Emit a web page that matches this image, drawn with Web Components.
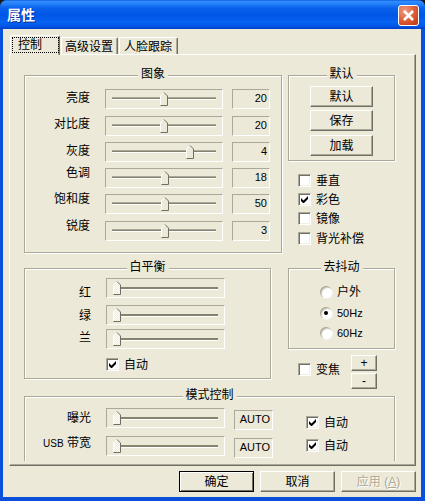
<!DOCTYPE html>
<html lang="zh">
<head>
<meta charset="utf-8">
<title>属性</title>
<style>
html, body { margin: 0; background: #1a1a1a; }
body { font: 12px/14px "Liberation Sans", "Noto Sans CJK SC", sans-serif; color: #000; }
.row { display: flex; align-items: flex-start; }
.col { display: flex; flex-direction: column; }
</style>
</head>
<body>
<xp-window heading="属性">
  <xp-tabs items="控制,高级设置,人脸跟踪">
    <div class="row">
      <xp-group heading="图象" style="width:258px;height:178px;--pad:13px 0 0 0">
        <xp-slider-row label="亮度" ltop="2" pos="55" value="20"></xp-slider-row>
        <xp-slider-row label="对比度" ltop="1" pos="55" value="20" style="margin-top:7px"></xp-slider-row>
        <xp-slider-row label="灰度" ltop="2" pos="81" value="4" style="margin-top:6px"></xp-slider-row>
        <xp-slider-row label="色调" ltop="-2" pos="56" value="18" style="margin-top:6px"></xp-slider-row>
        <xp-slider-row label="饱和度" ltop="-2" pos="56" value="50" style="margin-top:6px"></xp-slider-row>
        <xp-slider-row label="锐度" ltop="-2" pos="56" value="3" style="margin-top:7px"></xp-slider-row>
      </xp-group>
      <div class="col" style="margin-left:6px;width:107px">
        <xp-group heading="默认" style="width:107px;height:86px;--pad:10px 0 0 21px">
          <xp-button style="width:63px;height:21px">默认</xp-button>
          <xp-button style="width:63px;height:21px;margin-top:3px">保存</xp-button>
          <xp-button style="width:63px;height:21px;margin-top:4px">加载</xp-button>
        </xp-group>
        <xp-check style="margin:13px 0 0 10px">垂直</xp-check>
        <xp-check checked style="margin:6px 0 0 10px">彩色</xp-check>
        <xp-check style="margin:6px 0 0 10px">镜像</xp-check>
        <xp-check style="margin:7px 0 0 10px">背光补偿</xp-check>
      </div>
    </div>
    <div class="row" style="margin-top:15px">
      <xp-group heading="白平衡" style="width:247px;height:111px;--pad:9px 0 0 0">
        <xp-slider-row label="红" ltop="8" pos="7" low style="--lw:66px;--fw:119px"></xp-slider-row>
        <xp-slider-row label="绿" ltop="4" pos="7" low style="--lw:66px;--fw:119px;margin-top:5px"></xp-slider-row>
        <xp-slider-row label="兰" ltop="2" pos="7" low style="--lw:66px;--fw:119px;margin-top:4px"></xp-slider-row>
        <xp-check checked style="margin:9px 0 0 81px">自动</xp-check>
      </xp-group>
      <div class="col" style="margin-left:17px;width:107px">
        <xp-group heading="去抖动" style="width:107px;height:81px;--pad:16px 0 0 31px">
          <xp-radio>户外</xp-radio>
          <xp-radio checked style="margin-top:8px;font-size:11px">50Hz</xp-radio>
          <xp-radio style="margin-top:7px;font-size:11px">60Hz</xp-radio>
        </xp-group>
        <div class="row" style="margin:6px 0 0 10px">
          <xp-check style="margin-top:8px">变焦</xp-check>
          <div class="col" style="margin-left:11px">
            <xp-button style="width:26px;height:16px">+</xp-button>
            <xp-button style="width:26px;height:16px;margin-top:2px">-</xp-button>
          </div>
        </div>
      </div>
    </div>
    <xp-group heading="模式控制" open-bottom style="width:371px;height:65px;margin-top:7px;--pad:11px 0 0 0">
      <xp-slider-row label="曝光" ltop="3" pos="7" low value="AUTO" vtop="2" style="--lw:66px;--fw:119px">
        <xp-check checked style="margin:8px 0 0 33px">自动</xp-check>
      </xp-slider-row>
      <xp-slider-row label="USB 带宽" ltop="0" pos="7" low value="AUTO" vtop="2" style="--lw:66px;--fw:119px;margin-top:6px">
        <xp-check checked style="margin:3px 0 0 33px">自动</xp-check>
      </xp-slider-row>
    </xp-group>
  </xp-tabs>
  <div slot="actions" class="row" style="justify-content:flex-end;gap:6px;margin-top:5px">
    <xp-button default style="width:75px;height:21px">确定</xp-button>
    <xp-button style="width:75px;height:21px">取消</xp-button>
    <xp-button disabled style="width:75px;height:21px">应用 (<u>A</u>)</xp-button>
  </div>
</xp-window>

<script>
const windowTemplate = document.createElement("template");
windowTemplate.innerHTML = `
<style>
:host {
    display: flex;
    flex-direction: column;
    box-sizing: border-box;
    width: 425px;
    height: 501px;
    border-radius: 7px 7px 0 0;
    overflow: hidden;
    background: #0a4fdc;
}
#bar {
    flex: none;
    height: 29px;
    display: flex;
    align-items: center;
    justify-content: space-between;
    padding: 0 6px 0 7px;
    box-sizing: border-box;
    background: linear-gradient(#0a4fd0 0, #2f8cff 1px, #2a86fb 3px, #0a62ec 8px, #0056e6 15px, #0663f0 22px, #0058e8 26px, #003fc4 29px);
}
#heading {
    color: #fff;
    font: bold 14px/16px "Noto Sans CJK SC", sans-serif;
    text-shadow: 1px 1px 0 #0a2f9a;
    margin-bottom: 2px;
}
#close {
    width: 21px;
    height: 21px;
    box-sizing: border-box;
    border: 1px solid #fff;
    border-radius: 3px;
    background: radial-gradient(circle at 30% 25%, #ee9a7e, #dc5a34 55%, #b93710);
    display: flex;
    align-items: center;
    justify-content: center;
    margin-top: 2px;
}
#client {
    flex: none;
    width: 418px;
    height: 468px;
    margin-left: 3px;
    box-sizing: border-box;
    padding: 6px 5px 0 6px;
    background: #ece9d8;
}
</style>
<div id="bar">
  <span id="heading"></span>
  <span id="close">
    <svg width="13" height="13" viewBox="0 0 13 13"><path d="M2 2 L11 11 M11 2 L2 11" stroke="#fff" stroke-width="2.6" fill="none"/></svg>
  </span>
</div>
<div id="client">
  <slot></slot>
  <slot name="actions"></slot>
</div>
`;

class XpWindow extends HTMLElement {
    constructor() {
        super();
        this.attachShadow({ mode: "open" });
        this.shadowRoot.appendChild(windowTemplate.content.cloneNode(true));
    }

    connectedCallback() {
        this.shadowRoot.querySelector("#heading").textContent = this.getAttribute("heading");
    }
}

const tabsTemplate = document.createElement("template");
tabsTemplate.innerHTML = `
<style>
:host { display: block; }
#strip {
    display: flex;
    align-items: flex-end;
    height: 19px;
    padding-left: 1px;
    position: relative;
    z-index: 1;
}
.tab {
    box-sizing: border-box;
    height: 17px;
    margin-left: 1px;
    padding: 2px 4px 0 3px;
    background: #ece9d8;
    border-top: 1px solid #fff;
    border-left: 1px solid #fff;
    border-right: 1px solid #716f64;
    box-shadow: inset -1px 0 0 #aca899;
    border-radius: 2px 2px 0 0;
    white-space: nowrap;
}
.tab:nth-child(3) {
    padding: 2px 5px 0 4px;
}
.tab:first-child {
    height: 20px;
    width: 50px;
    margin: 0 0 -1px 0;
    padding: 1px 0 0 1px;
}
.tab:first-child span {
    display: block;
    box-sizing: border-box;
    width: 47px;
    height: 16px;
    padding: 0 0 0 5px;
    line-height: 14px;
    border: 1px dotted #000;
}
#page {
    box-sizing: border-box;
    height: 412px;
    padding: 20px 0 0 14px;
    background: #ece9d8;
    border-top: 1px solid #fff;
    border-left: 1px solid #fff;
    border-right: 1px solid #716f64;
    border-bottom: 1px solid #716f64;
    box-shadow: inset -1px -1px 0 #aca899;
}
</style>
<div id="strip"></div>
<div id="page"><slot></slot></div>
`;

class XpTabs extends HTMLElement {
    constructor() {
        super();
        this.attachShadow({ mode: "open" });
        this.shadowRoot.appendChild(tabsTemplate.content.cloneNode(true));
    }

    connectedCallback() {
        const strip = this.shadowRoot.querySelector("#strip");
        for (const name of this.getAttribute("items").split(",")) {
            const tab = document.createElement("div");
            tab.className = "tab";
            tab.innerHTML = `<span>${name}</span>`;
            strip.appendChild(tab);
        }
    }
}

const groupTemplate = document.createElement("template");
groupTemplate.innerHTML = `
<style>
:host {
    display: block;
    position: relative;
    box-sizing: border-box;
    flex: none;
    border: 1px solid #aca899;
    box-shadow: inset 1px 1px 0 #fff, 1px 1px 0 #fff;
    padding: var(--pad, 0);
}
:host([open-bottom]) {
    border-bottom: 0;
    box-shadow: inset 1px 1px 0 #fff, 1px 0 0 #fff;
}
#legend {
    position: absolute;
    top: -9px;
    left: 50%;
    transform: translateX(-50%);
    padding: 0 3px;
    background: #ece9d8;
    white-space: nowrap;
}
</style>
<span id="legend"></span>
<slot></slot>
`;

class XpGroup extends HTMLElement {
    constructor() {
        super();
        this.attachShadow({ mode: "open" });
        this.shadowRoot.appendChild(groupTemplate.content.cloneNode(true));
    }

    connectedCallback() {
        this.shadowRoot.querySelector("#legend").textContent = this.getAttribute("heading");
    }
}

const sliderRowTemplate = document.createElement("template");
sliderRowTemplate.innerHTML = `
<style>
:host {
    display: flex;
    align-items: flex-start;
}
#label {
    flex: none;
    width: var(--lw, 65px);
    text-align: right;
    white-space: nowrap;
}
#label small { font-size: 10px; }
#frame {
    flex: none;
    position: relative;
    box-sizing: border-box;
    width: var(--fw, 118px);
    height: 20px;
    margin-left: 15px;
    padding: 7px 6px 0;
    border-top: 1px solid #aca899;
    border-left: 1px solid #aca899;
    border-right: 1px solid #fff;
    border-bottom: 1px solid #fff;
}
#track {
    height: 3px;
    background: linear-gradient(#aca899 0 1px, #85836f 1px 2px, #fff 2px 3px);
}
:host([low]) #track {
    background: linear-gradient(#85836f 0 2px, #fff 2px 3px);
    margin-top: 1px;
}
#thumb {
    position: absolute;
    top: 2px;
    display: block;
}
#value {
    flex: none;
    box-sizing: border-box;
    width: 38px;
    height: 20px;
    margin-left: 9px;
    padding: 1px 2px 0 0;
    text-align: right;
    font-size: 11px;
    border-top: 1px solid #aca899;
    border-left: 1px solid #aca899;
    border-right: 1px solid #fff;
    border-bottom: 1px solid #fff;
}
:host([low]) #value { width: 39px; }
</style>
<span id="label"></span>
<div id="frame">
  <div id="track"></div>
  <svg id="thumb" width="8" height="14" viewBox="0 0 8 14">
    <defs>
      <pattern id="dots" width="2" height="2" patternUnits="userSpaceOnUse">
        <rect width="2" height="2" fill="#ece9d8"/>
        <rect width="1" height="1" fill="#fff"/>
        <rect x="1" y="1" width="1" height="1" fill="#fff"/>
      </pattern>
    </defs>
    <path id="body" d="M.5 13.5V4L4 .5 7.5 4v9.5z" fill="#ece9d8"/>
    <path d="M.5 13V4L3.5 1" stroke="#fff" fill="none"/>
    <path d="M4 .5L7.5 4v9.5H.5" stroke="#716f64" fill="none"/>
  </svg>
</div>
<div id="value"></div>
<slot></slot>
`;

class XpSliderRow extends HTMLElement {
    constructor() {
        super();
        this.attachShadow({ mode: "open" });
        this.shadowRoot.appendChild(sliderRowTemplate.content.cloneNode(true));
    }

    connectedCallback() {
        const root = this.shadowRoot;
        const label = root.querySelector("#label");
        // latin letters are narrower than the han text around them in the dialog font
        label.innerHTML = this.getAttribute("label").replace(/[A-Za-z]+/g, m => `<small>${m}</small>`);
        label.style.marginTop = (this.getAttribute("ltop") || 0) + "px";
        root.querySelector("#thumb").style.left = (this.getAttribute("pos") || 0) - 1 + "px";
        const value = root.querySelector("#value");
        if (this.hasAttribute("value")) {
            value.textContent = this.getAttribute("value");
            value.style.marginTop = (this.getAttribute("vtop") || 0) + "px";
        } else {
            value.style.display = "none";
        }
        if (this.hasAttribute("low")) {
            root.querySelector("#body").setAttribute("fill", "url(#dots)");
        }
    }
}

const buttonTemplate = document.createElement("template");
buttonTemplate.innerHTML = `
<style>
:host {
    display: flex;
    align-items: center;
    justify-content: center;
    box-sizing: border-box;
    flex: none;
    background: #ece9d8;
    border-top: 1px solid #fff;
    border-left: 1px solid #fff;
    border-right: 1px solid #716f64;
    border-bottom: 1px solid #716f64;
    box-shadow: inset -1px -1px 0 #aca899;
}
:host([default]) {
    border: 1px solid #000;
    box-shadow: inset 1px 1px 0 #fff, inset -1px -1px 0 #716f64;
}
:host([disabled]) {
    color: #aca899;
    text-shadow: 1px 1px 0 #fff;
}
</style>
<slot></slot>
`;

class XpButton extends HTMLElement {
    constructor() {
        super();
        this.attachShadow({ mode: "open" });
        this.shadowRoot.appendChild(buttonTemplate.content.cloneNode(true));
    }
}

const checkTemplate = document.createElement("template");
checkTemplate.innerHTML = `
<style>
:host {
    display: flex;
    align-items: center;
    gap: 5px;
    height: 13px;
    white-space: nowrap;
}
#box {
    flex: none;
    box-sizing: border-box;
    width: 13px;
    height: 13px;
    background: #fff;
    border-top: 1px solid #aca899;
    border-left: 1px solid #aca899;
    border-right: 1px solid #fff;
    border-bottom: 1px solid #fff;
    box-shadow: inset 1px 1px 0 #716f64, inset -1px -1px 0 #f1efe2;
}
svg { display: none; margin: 2px 0 0 2px; }
:host([checked]) svg { display: block; }
</style>
<span id="box"><svg width="7" height="7" viewBox="0 0 7 7"><path d="M0 2v3l2 2h1l4-4V0L2.500 4.500z" fill="#000"/></svg></span>
<span><slot></slot></span>
`;

class XpCheck extends HTMLElement {
    constructor() {
        super();
        this.attachShadow({ mode: "open" });
        this.shadowRoot.appendChild(checkTemplate.content.cloneNode(true));
    }
}

const radioTemplate = document.createElement("template");
radioTemplate.innerHTML = `
<style>
:host {
    display: flex;
    align-items: center;
    gap: 5px;
    height: 13px;
    white-space: nowrap;
}
#dot {
    flex: none;
    display: flex;
    align-items: center;
    justify-content: center;
    width: 12px;
    height: 12px;
    border-radius: 50%;
    background: #fff;
    box-shadow: inset 1px 1px 0 #aca899, inset 2px 2px 0 #d8d5c6, 1px 1px 0 #f6f5ee;
}
#dot i {
    display: none;
    width: 4px;
    height: 4px;
    border-radius: 50%;
    background: #000;
}
:host([checked]) #dot i { display: block; }
</style>
<span id="dot"><i></i></span>
<span><slot></slot></span>
`;

class XpRadio extends HTMLElement {
    constructor() {
        super();
        this.attachShadow({ mode: "open" });
        this.shadowRoot.appendChild(radioTemplate.content.cloneNode(true));
    }
}

customElements.define("xp-window", XpWindow);
customElements.define("xp-tabs", XpTabs);
customElements.define("xp-group", XpGroup);
customElements.define("xp-slider-row", XpSliderRow);
customElements.define("xp-button", XpButton);
customElements.define("xp-check", XpCheck);
customElements.define("xp-radio", XpRadio);
</script>
</body>
</html>
